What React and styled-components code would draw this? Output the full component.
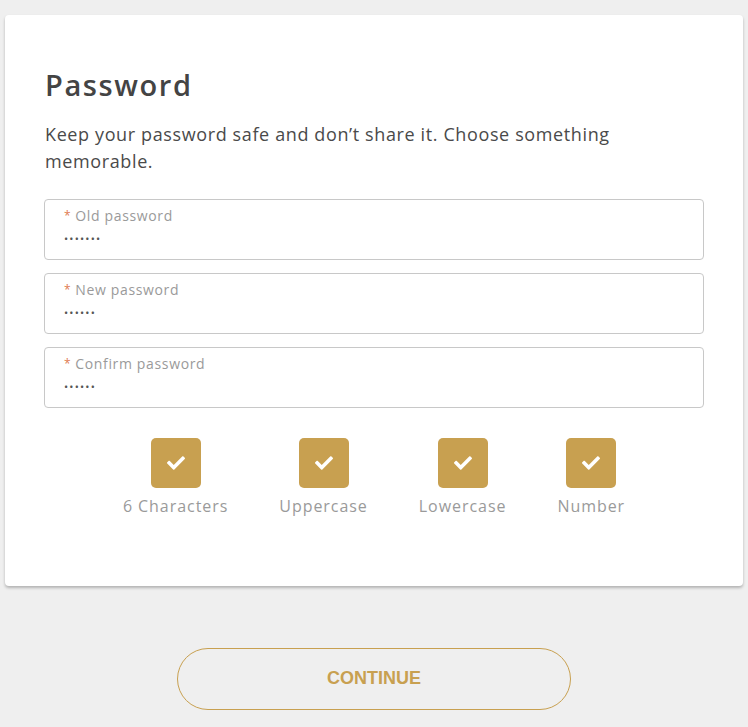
import React from "react";
import styled, { createGlobalStyle } from "styled-components";
import { FaCheck } from "react-icons/fa";

const GlobalStyle = createGlobalStyle`
body {
  margin: 0;
  background: #efefef;
  font-family: "Open Sans", "Noto Sans", sans-serif;
}
`;

const Page = styled.div`
  display: flex;
  flex-direction: column;
  align-items: center;
  padding: 15px 5px 17px;
`;

const Card = styled.div`
  box-sizing: border-box;
  width: 100%;
  background: #fff;
  border-radius: 4px;
  box-shadow: 0 2px 3px rgba(0, 0, 0, 0.25);
  padding: 50px 39px 69px 39px;
  display: flex;
  flex-direction: column;
`;

const Title = styled.h1`
  margin: 0 0 16px 1px;
  font-size: 29px;
  font-weight: 600;
  color: #444;
  line-height: 40px;
  letter-spacing: 1.6px;
`;

const Intro = styled.p`
  margin: 0 0 24px 1px;
  font-size: 18px;
  line-height: 27px;
  color: #4a4a4a;
  letter-spacing: 0.62px;
`;

const Fields = styled.div`
  display: flex;
  flex-direction: column;
  gap: 13.5px;
`;

const Field = styled.div`
  box-sizing: border-box;
  height: 60.5px;
  border: 1px solid #c8c8c8;
  border-radius: 4px;
  padding: 6px 19px 0;
  display: flex;
  flex-direction: column;
`;

const Label = styled.label`
  font-size: 14px;
  line-height: 20px;
  color: #9a9a9a;
  letter-spacing: 0.65px;
  span {
    display: inline-block;
    color: #e07a50;
    font-size: 12px;
    margin-right: 4px;
    vertical-align: 1px;
  }
`;

const Dots = styled.div`
  font-size: 11px;
  line-height: 20px;
  color: #555;
  letter-spacing: 1.2px;
  margin-top: 3px;
`;

const Rules = styled.div`
  display: flex;
  justify-content: center;
  gap: 51px;
  margin-top: 30px;
`;

const Rule = styled.div`
  display: flex;
  flex-direction: column;
  align-items: center;
  gap: 7px;
  font-size: 16px;
  line-height: 22px;
  color: #9a9a9a;
  letter-spacing: 0.95px;
`;

const CheckBox = styled.div`
  width: 50px;
  height: 50px;
  border-radius: 5px;
  background: ${(p) => (p.ok ? "#c8a050" : "#ddd")};
  display: flex;
  align-items: center;
  justify-content: center;
  color: #fff;
  font-size: 18px;
`;

const Continue = styled.button`
  margin-top: 62px;
  width: 394px;
  height: 62px;
  border: 1px solid #c8a050;
  border-radius: 31px;
  background: transparent;
  color: #c8a050;
  font-family: "Liberation Sans", Arial, sans-serif;
  font-weight: bold;
  font-size: 18px;
  cursor: pointer;
`;

const fields = [
  { label: "Old password", value: "•••••••" },
  { label: "New password", value: "••••••" },
  { label: "Confirm password", value: "••••••" },
];

const rules = ["6 Characters", "Uppercase", "Lowercase", "Number"];

export default function App() {
  return (
    <Page>
      <GlobalStyle />
      <Card>
        <Title>Password</Title>
        <Intro>
          Keep your password safe and don’t share it. Choose something memorable.
        </Intro>
        <Fields>
          {fields.map((f) => (
            <Field key={f.label}>
              <Label>
                <span>*</span>
                {f.label}
              </Label>
              <Dots>{f.value}</Dots>
            </Field>
          ))}
        </Fields>
        <Rules>
          {rules.map((r) => (
            <Rule key={r}>
              <CheckBox ok>
                <FaCheck />
              </CheckBox>
              {r}
            </Rule>
          ))}
        </Rules>
      </Card>
      <Continue>CONTINUE</Continue>
    </Page>
  );
}
